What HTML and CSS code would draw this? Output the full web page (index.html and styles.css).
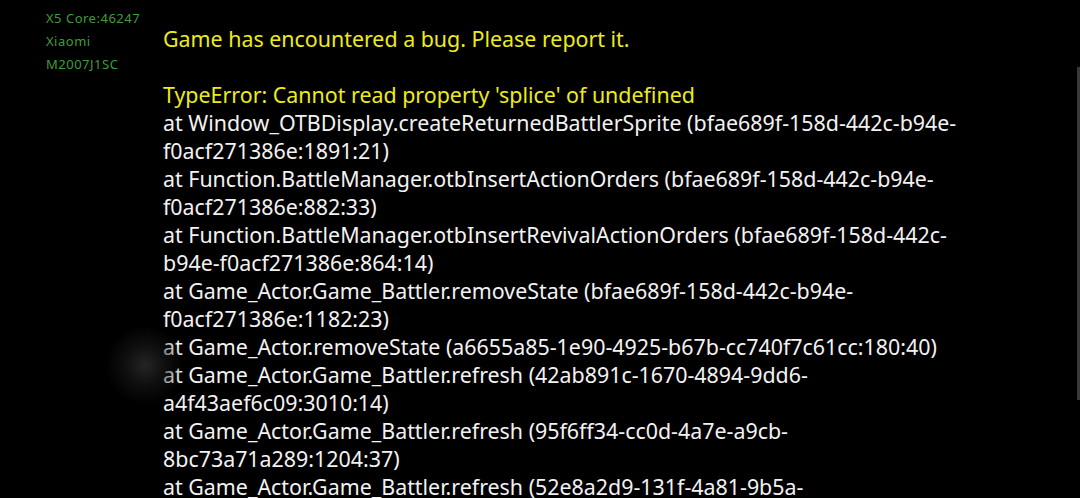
FILE: index.html
```html
<!DOCTYPE html>
<html>
<head>
<meta charset="utf-8">
<link rel="stylesheet" href="styles.css">
</head>
<body>
<div class="page">
  <div class="device">
    <div>X5 Core:46247</div>
    <div>Xiaomi</div>
    <div>M2007J1SC</div>
  </div>
  <div class="report">
    <div class="yellow">Game has encountered a bug. Please report it.</div>
    <div class="blank"></div>
    <div class="yellow">TypeError: Cannot read property 'splice' of undefined</div>
    <div>at Window_OTBDisplay.createReturnedBattlerSprite (bfae689f-158d-442c-b94e-</div>
    <div>f0acf271386e:1891:21)</div>
    <div>at Function.BattleManager.otbInsertActionOrders (bfae689f-158d-442c-b94e-</div>
    <div>f0acf271386e:882:33)</div>
    <div>at Function.BattleManager.otbInsertRevivalActionOrders (bfae689f-158d-442c-</div>
    <div>b94e-f0acf271386e:864:14)</div>
    <div>at Game_Actor.Game_Battler.removeState (bfae689f-158d-442c-b94e-</div>
    <div>f0acf271386e:1182:23)</div>
    <div>at Game_Actor.removeState (a6655a85-1e90-4925-b67b-cc740f7c61cc:180:40)</div>
    <div>at Game_Actor.Game_Battler.refresh (42ab891c-1670-4894-9dd6-</div>
    <div>a4f43aef6c09:3010:14)</div>
    <div>at Game_Actor.Game_Battler.refresh (95f6ff34-cc0d-4a7e-a9cb-</div>
    <div>8bc73a71a289:1204:37)</div>
    <div>at Game_Actor.Game_Battler.refresh (52e8a2d9-131f-4a81-9b5a-</div>
  </div>
</div>
<div class="blur"></div>
<div class="scrollbar"></div>
</body>
</html>
```
FILE: styles.css
```css
html, body {
  margin: 0;
  padding: 0;
  background: #000;
  height: 498px;
  overflow: hidden;
}
.page {
  display: flex;
  align-items: flex-start;
}
.device {
  width: 117px;
  padding: 7px 0 0 46px;
  font-family: "Noto Sans", "Liberation Sans", sans-serif;
  font-size: 13px;
  letter-spacing: 0.5px;
  line-height: 23px;
  color: #3f9c3f;
}
.report {
  padding-top: 25px;
  font-family: "Noto Sans", "Liberation Sans", sans-serif;
  font-size: 21.4px;
  line-height: 28px;
  color: #f2f2f2;
  white-space: nowrap;
}
.yellow {
  color: #ecec1c;
}
.blank {
  height: 28px;
}
.blur {
  position: absolute;
  left: 105px;
  top: 325px;
  width: 80px;
  height: 80px;
  border-radius: 50%;
  background: radial-gradient(circle, rgba(40,40,40,0.9) 0%, rgba(25,25,25,0.6) 35%, rgba(0,0,0,0) 70%);
}
.scrollbar {
  position: absolute;
  left: 1077px;
  top: 67px;
  width: 3px;
  height: 333px;
  background: #383838;
}
```
